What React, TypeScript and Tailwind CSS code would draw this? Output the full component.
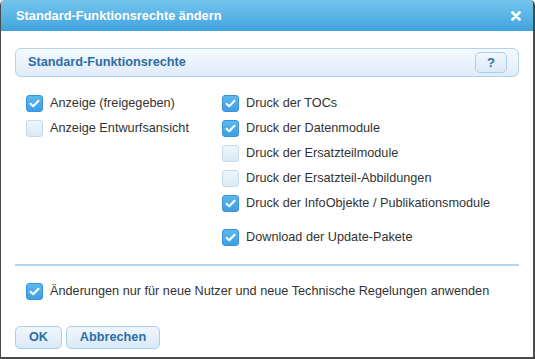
import React from "react";

type Item = { label: string; checked: boolean; extraTop?: boolean };

const leftItems: Item[] = [
  { label: "Anzeige (freigegeben)", checked: true },
  { label: "Anzeige Entwurfsansicht", checked: false },
];

const rightItems: Item[] = [
  { label: "Druck der TOCs", checked: true },
  { label: "Druck der Datenmodule", checked: true },
  { label: "Druck der Ersatzteilmodule", checked: false },
  { label: "Druck der Ersatzteil-Abbildungen", checked: false },
  { label: "Druck der InfoObjekte / Publikationsmodule", checked: true },
  { label: "Download der Update-Pakete", checked: true, extraTop: true },
];

function Checkbox({ checked }: { checked: boolean }) {
  if (checked) {
    return (
      <span className="flex h-[17px] w-[17px] shrink-0 items-center justify-center rounded-[3px] border border-[#3a93d6] bg-gradient-to-b from-[#5cb8ef] to-[#3d9fe3]">
        <svg width="11" height="9" viewBox="0 0 11 9">
          <path d="M1.5 4.8 L4.2 7.2 L9.5 1.8" fill="none" stroke="white" strokeWidth="2" strokeLinecap="round" strokeLinejoin="round" />
        </svg>
      </span>
    );
  }
  return (
    <span className="block h-[17px] w-[17px] shrink-0 rounded-[3px] border border-[#c4dbef] bg-gradient-to-b from-[#eef5fc] to-[#dbe9f6]" />
  );
}

function Row({ item }: { item: Item }) {
  return (
    <label className={`flex h-[25px] items-center gap-[7px] ${item.extraTop ? "mt-[9px]" : ""}`}>
      <Checkbox checked={item.checked} />
      <span className="text-[12.7px] text-[#333]">{item.label}</span>
    </label>
  );
}

export default function App() {
  return (
    <div
      className="flex h-[359px] w-[535px] flex-col overflow-hidden rounded-t-[5px] border-b-2 border-l border-r-2 border-[#4a4a4a] bg-white"
      style={{ fontFamily: '"Liberation Sans", Arial, sans-serif' }}
    >
      {/* title bar */}
      <div className="flex h-[31px] shrink-0 items-center justify-between bg-gradient-to-b from-[#74c3eb] via-[#5bb5e6] to-[#3fa4dd] pl-[15px] pr-[12px]">
        <span className="text-[12.8px] font-bold text-white">Standard-Funktionsrechte ändern</span>
        <svg width="10" height="10" viewBox="0 0 10 10">
          <path d="M1.5 1.5 L8.5 8.5 M8.5 1.5 L1.5 8.5" stroke="white" strokeWidth="2.6" strokeLinecap="round" />
        </svg>
      </div>

      <div className="flex flex-1 flex-col px-[14px] pt-[17px]">
        {/* section header */}
        <div className="flex h-[29px] items-center justify-between rounded-[6px] border border-[#aed2ef] bg-gradient-to-b from-[#f5f9fd] to-[#dfecf8] pl-[12px] pr-[11px]">
          <span className="text-[12.7px] font-bold text-[#2c6ea6]">Standard-Funktionsrechte</span>
          <span className="flex h-[21px] w-[32px] items-center justify-center rounded-[5px] border border-[#a9cfee] bg-gradient-to-b from-[#f0f6fc] to-[#dbeaf7] text-[13px] font-bold text-[#2c6ea6]">
            ?
          </span>
        </div>

        {/* options */}
        <div className="mt-[14px] flex pl-[11px]">
          <div className="flex w-[196px] flex-col">
            {leftItems.map((it) => (
              <Row key={it.label} item={it} />
            ))}
          </div>
          <div className="flex flex-col">
            {rightItems.map((it) => (
              <Row key={it.label} item={it} />
            ))}
          </div>
        </div>

        <div className="mt-[14px] h-[2px] bg-[#b3d6f0]" />

        <div className="mt-[13px] pl-[11px]">
          <Row item={{ label: "Änderungen nur für neue Nutzer und neue Technische Regelungen anwenden", checked: true }} />
        </div>

        {/* buttons */}
        <div className="mt-[22px] flex gap-[4px]">
          <button className="h-[23px] w-[47px] rounded-[5px] border border-[#a9cfee] bg-gradient-to-b from-[#f0f6fc] to-[#d9e9f7] text-[12.7px] font-bold text-[#2c6ea6]">
            OK
          </button>
          <button className="h-[23px] w-[94px] rounded-[5px] border border-[#a9cfee] bg-gradient-to-b from-[#f0f6fc] to-[#d9e9f7] text-[12.7px] font-bold text-[#2c6ea6]">
            Abbrechen
          </button>
        </div>
      </div>
    </div>
  );
}
